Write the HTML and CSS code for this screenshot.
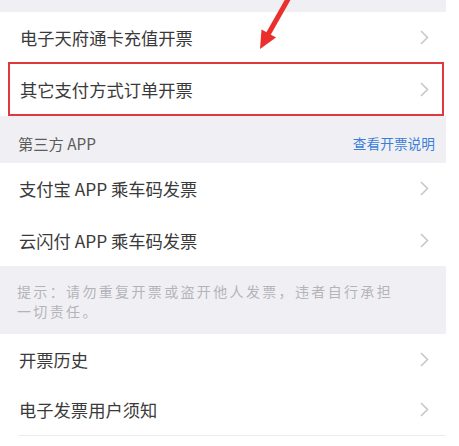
FILE: index.html
```html
<!DOCTYPE html>
<html lang="zh-CN">

<head>
    <meta charset="UTF-8">
    <meta name="viewport" content="width=device-width, initial-scale=1.0">
    <title>电子发票</title>
    <link rel="stylesheet" href="styles.css">
</head>

<body>
    <div id="page">
        <div class="top_gap"></div>

        <div class="group">
            <div class="row">
                <span>电子天府通卡充值开票</span>
                <svg class="chev" viewBox="0 0 9 15"><polyline points="1,1 7.5,7.5 1,14" /></svg>
            </div>
            <div class="row marked">
                <span>其它支付方式订单开票</span>
                <svg class="chev" viewBox="0 0 9 15"><polyline points="1,1 7.5,7.5 1,14" /></svg>
            </div>
        </div>

        <div class="section_head">
            <span>第三方 APP</span>
            <a class="link">查看开票说明</a>
        </div>

        <div class="group">
            <div class="row tall">
                <span>支付宝 APP 乘车码发票</span>
                <svg class="chev" viewBox="0 0 9 15"><polyline points="1,1 7.5,7.5 1,14" /></svg>
            </div>
            <div class="row tall">
                <span>云闪付 APP 乘车码发票</span>
                <svg class="chev" viewBox="0 0 9 15"><polyline points="1,1 7.5,7.5 1,14" /></svg>
            </div>
        </div>

        <p class="tip">提示：请勿重复开票或盗开他人发票，违者自行承担一切责任。</p>

        <div class="group">
            <div class="row">
                <span>开票历史</span>
                <svg class="chev" viewBox="0 0 9 15"><polyline points="1,1 7.5,7.5 1,14" /></svg>
            </div>
            <div class="row last">
                <span>电子发票用户须知</span>
                <svg class="chev" viewBox="0 0 9 15"><polyline points="1,1 7.5,7.5 1,14" /></svg>
            </div>
        </div>

        <!-- 빨간 화살표 (annotation) -->
        <svg class="arrow" viewBox="0 0 459 60">
            <line x1="291" y1="-6" x2="266" y2="38" />
            <polygon points="260,49 261.5,29.5 276,37.5" />
        </svg>
    </div>
</body>

</html>
```

FILE: styles.css
```css
* {
    box-sizing: border-box;
}

body {
    margin: 0;
    background: #fff;
    font-family: "Noto Sans CJK SC", "Noto Sans", sans-serif;
}

#page {
    position: relative;
    width: 446px;
    background: #f0f0f4;
}

.top_gap {
    height: 12px;
}

.group {
    background: #fff;
}

.row {
    display: flex;
    align-items: center;
    justify-content: space-between;
    height: 50px;
    padding: 0 17px 0 20px;
    font-size: 17.3px;
    color: #3a3a3a;
}

.row.tall {
    height: 51.5px;
    padding-left: 19px;
}

.row.marked {
    height: 54px;
    margin: 0 2px 0 8px;
    padding: 0 13px 0 10px;
    border: 2.5px solid #e0393d;
}

.row.last {
    height: 52px;
    border-bottom: 1px solid #ececee;
    margin-left: 18px;
    padding-left: 1px;
}

.group:last-of-type .row:first-child {
    padding-left: 19px;
}

.chev {
    width: 9px;
    height: 15px;
    fill: none;
    stroke: #c7c7cc;
    stroke-width: 1.6;
}

.section_head {
    display: flex;
    justify-content: space-between;
    align-items: center;
    height: 47px;
    padding: 7px 11px 0 18px;
    font-size: 15.3px;
    color: #5c5c5c;
}

.link {
    font-size: 13.7px;
    color: #3b7ed8;
}

.tip {
    margin: 0;
    height: 68px;
    padding: 15px 44px 0 17px;
    font-size: 14px;
    letter-spacing: 2.35px;
    line-height: 20px;
    color: #b4b4b8;
}

.arrow {
    position: absolute;
    left: 0;
    top: 0;
    width: 459px;
    height: 60px;
}

.arrow line {
    stroke: #ea2f2c;
    stroke-width: 5;
}

.arrow polygon {
    fill: #ea2f2c;
}
```
